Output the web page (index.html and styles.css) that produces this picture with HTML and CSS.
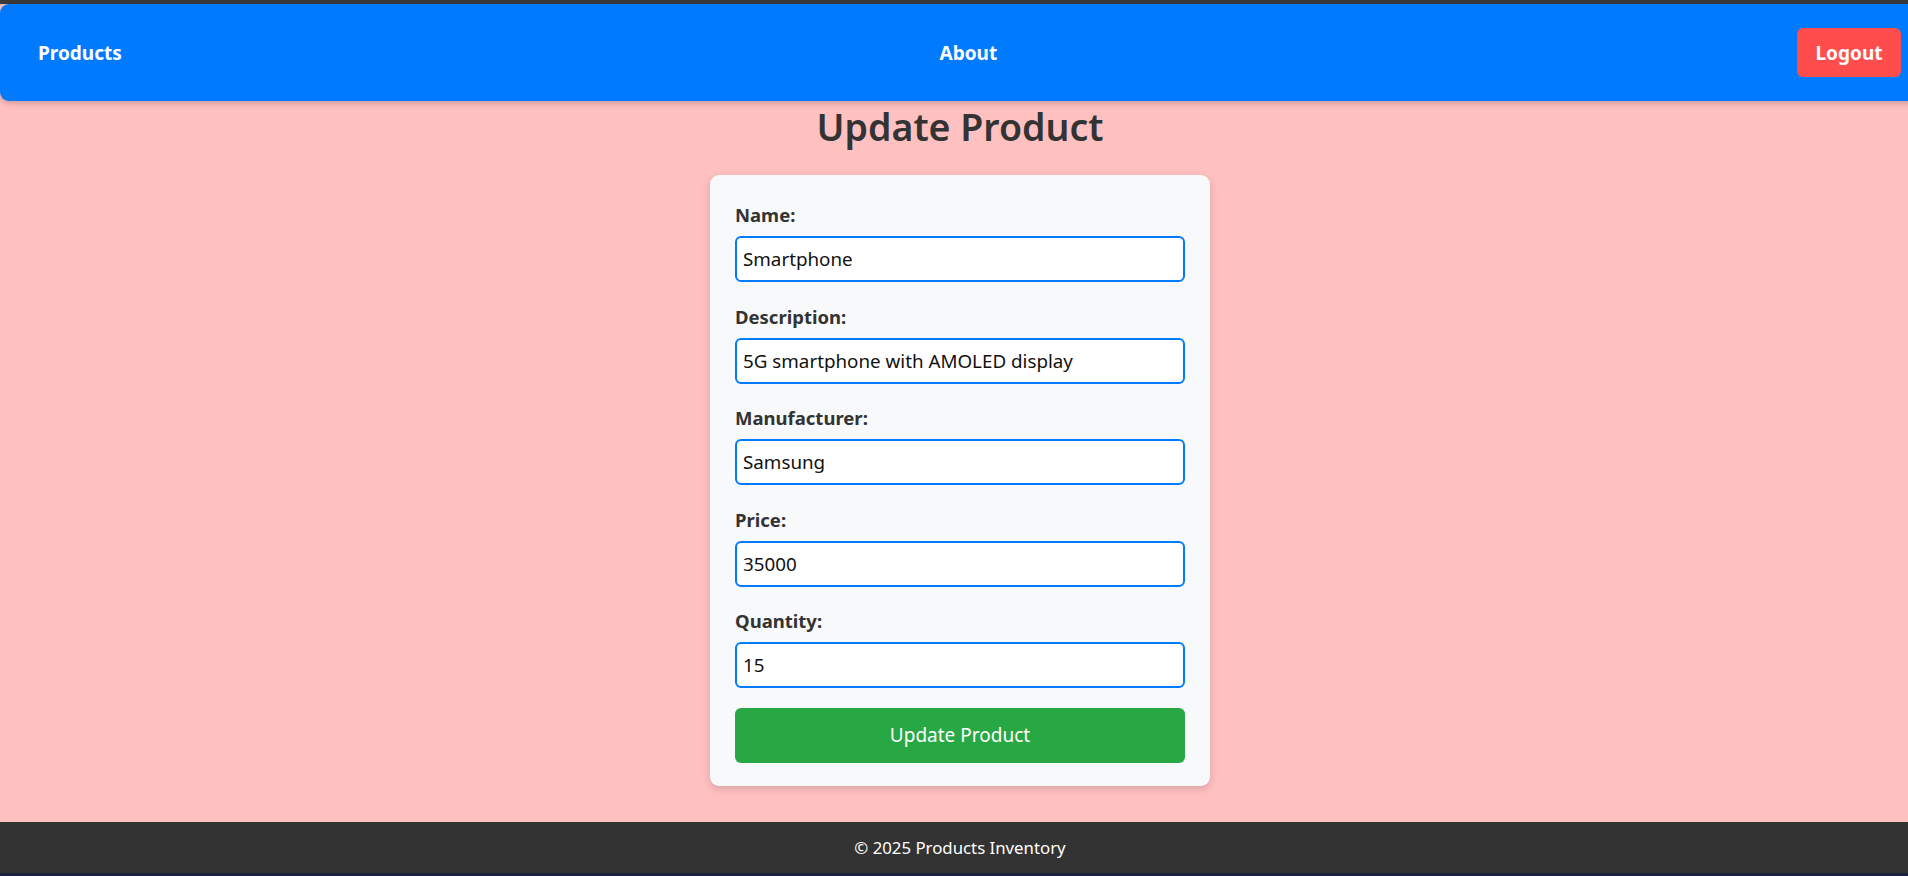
FILE: index.html
```html
<!DOCTYPE html>
<html lang="en">
<head>
<meta charset="utf-8">
<title>Update Product</title>
<link rel="stylesheet" href="styles.css">
</head>
<body>
<div class="topstrip"></div>
<nav class="navbar">
  <a class="nav-link nav-first" href="#">Products</a>
  <a class="nav-link" href="#">About</a>
  <button class="logout" type="button">Logout</button>
</nav>
<main class="main">
  <h1 class="title">Update Product</h1>
  <form class="card">
    <div class="group">
      <label class="label" for="name">Name:</label>
      <input class="input" id="name" type="text" value="Smartphone">
    </div>
    <div class="group">
      <label class="label" for="desc">Description:</label>
      <input class="input" id="desc" type="text" value="5G smartphone with AMOLED display">
    </div>
    <div class="group">
      <label class="label" for="manu">Manufacturer:</label>
      <input class="input" id="manu" type="text" value="Samsung">
    </div>
    <div class="group">
      <label class="label" for="price">Price:</label>
      <input class="input" id="price" type="text" value="35000">
    </div>
    <div class="group">
      <label class="label" for="qty">Quantity:</label>
      <input class="input" id="qty" type="text" value="15">
    </div>
    <button class="submit" type="button">Update Product</button>
  </form>
</main>
<footer class="footer">© 2025 Products Inventory</footer>
<div class="bottomstrip"></div>
</body>
</html>
```
FILE: styles.css
```css
* { box-sizing: border-box; }
html { margin: 0; padding: 0; overflow: hidden; }
body {
  margin: 0;
  padding: 0;
  width: 1920px;
  height: 876px;
  overflow: hidden;
  display: flex;
  flex-direction: column;
  background: #ffc0c0;
  font-family: "Noto Sans", "Open Sans", sans-serif;
  color: #333;
}
.topstrip { height: 4px; background: #3a3a3a; flex: none; }
.bottomstrip { height: 3px; background: #1b2240; flex: none; }
.navbar {
  flex: none;
  height: 97px;
  background: #007bff;
  border-radius: 9px;
  box-shadow: 0 2px 6px rgba(0,0,0,0.22);
  display: flex;
  align-items: center;
  justify-content: space-between;
  padding: 0 19px 0 28px;
  position: relative;
  z-index: 1;
}
.nav-link {
  color: #fff;
  text-decoration: none;
  font-weight: 700;
  font-size: 19px;
  padding: 0 10px;
}
.nav-first { padding: 0 18px 0 10px; }
.logout {
  width: 104px;
  height: 49px;
  border: none;
  border-radius: 6px;
  background: #ff4d4d;
  color: #fff;
  font-family: inherit;
  font-weight: 700;
  font-size: 19px;
  padding: 0;
}
.main {
  flex: 1;
  display: flex;
  flex-direction: column;
  align-items: center;
}
.title {
  margin: 1px 0 23px;
  font-size: 37.5px;
  line-height: 50px;
  font-weight: 600;
  color: #333;
}
.card {
  width: 500px;
  background: #f8f9fa;
  border-radius: 9px;
  padding: 25px 25px 23px;
  box-shadow: 0 3px 8px rgba(0,0,0,0.15);
}
.group { margin-bottom: 19.6px; }
.label {
  display: block;
  font-weight: 700;
  font-size: 18.5px;
  line-height: 30px;
  margin-bottom: 6px;
  color: #333;
}
.input {
  display: block;
  width: 100%;
  height: 46px;
  border: 2px solid #007bff;
  border-radius: 6px;
  background: #fff;
  padding: 0 6px;
  font-family: inherit;
  font-size: 18.8px;
  color: #111;
  outline: none;
}
.submit {
  display: block;
  width: 100%;
  height: 55px;
  border: none;
  border-radius: 6px;
  background: #28a745;
  color: #fff;
  font-family: inherit;
  font-size: 19px;
  padding: 0;
}
.footer {
  flex: none;
  height: 51px;
  background: #333;
  color: #fff;
  display: flex;
  align-items: center;
  justify-content: center;
  font-size: 16.8px;
}
```
